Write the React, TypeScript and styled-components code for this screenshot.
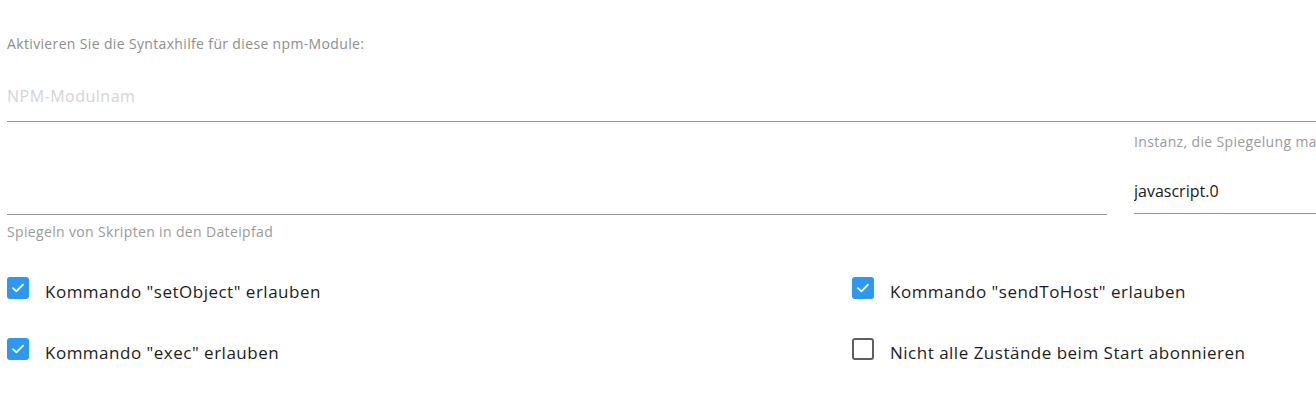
import * as React from "react";
import styled, { createGlobalStyle } from "styled-components";

const GlobalStyle = createGlobalStyle`
  html, body {
    margin: 0;
    padding: 0;
    background: #ffffff;
    overflow: hidden;
  }
  body {
    font-family: "Open Sans", "Noto Sans", sans-serif;
  }
`;

const Page = styled.div`
  width: 1690px;
  padding: 0 0 0 7px;
  box-sizing: border-box;
`;

const SectionLabel = styled.div`
  margin-top: 35px;
  height: 18px;
  line-height: 18px;
  font-size: 14px;
  letter-spacing: 0.35px;
  color: #8e8e8e;
`;

const Field = styled.div<{ $width?: string }>`
  display: flex;
  flex-direction: column;
  width: ${(p) => p.$width || "100%"};
`;

const FloatLabel = styled.div`
  height: 18px;
  line-height: 18px;
  font-size: 14px;
  letter-spacing: 0.35px;
  color: #9a9a9a;
  white-space: nowrap;
`;

const Input = styled.input`
  border: none;
  border-bottom: 1px solid #949494;
  outline: none;
  padding: 0;
  background: transparent;
  font-family: inherit;
  font-size: 16px;
  color: #1a1a1a;
  box-sizing: border-box;

  &::placeholder {
    color: #d4d4d4;
    letter-spacing: 0.5px;
  }
`;

const ModuleInput = styled(Input)`
  margin-top: 22px;
  height: 47px;
  padding-bottom: 4px;
  width: 100%;
`;

const MirrorRow = styled.div`
  display: flex;
  gap: 27px;
  margin-top: 11px;
`;

const MirrorInput = styled(Input)`
  height: 82px;
  width: 100%;
`;

const InstanceInput = styled(Input)`
  margin-top: 14px;
  height: 49px;
  padding-top: 4px;
  width: 100%;
`;

const Helper = styled.div`
  margin-top: 8px;
  height: 18px;
  line-height: 18px;
  font-size: 14px;
  letter-spacing: 0.35px;
  color: #9a9a9a;
`;

const Options = styled.div`
  display: grid;
  grid-template-columns: 845px 845px;
  row-gap: 39px;
  margin-top: 36px;
`;

const Option = styled.label`
  display: flex;
  align-items: center;
  height: 22px;
  gap: 16px;
  font-size: 17px;
  letter-spacing: 0.5px;
  color: #1c1c1c;
  cursor: pointer;
`;

const Box = styled.span<{ $checked: boolean }>`
  width: 22px;
  height: 22px;
  box-sizing: border-box;
  border-radius: 3px;
  display: flex;
  align-items: center;
  justify-content: center;
  background: ${(p) => (p.$checked ? "#2e98f0" : "#ffffff")};
  border: ${(p) => (p.$checked ? "none" : "2px solid #5f5f5f")};
  flex-shrink: 0;
`;

const OptionText = styled.span`
  position: relative;
  top: 3px;
`;

const options = [
  { text: 'Kommando "setObject" erlauben', checked: true },
  { text: 'Kommando "sendToHost" erlauben', checked: true },
  { text: 'Kommando "exec" erlauben', checked: true },
  { text: "Nicht alle Zustände beim Start abonnieren", checked: false },
];

const Check = () => (
  <svg width="14" height="14" viewBox="0 0 14 14" fill="none">
    <path d="M2 7.2 L5.4 10.4 L12 3.6" stroke="#ffffff" strokeWidth="1.8" strokeLinecap="round" strokeLinejoin="round" />
  </svg>
);

export default function App() {
  return (
    <Page>
      <GlobalStyle />
      <SectionLabel>Aktivieren Sie die Syntaxhilfe für diese npm-Module:</SectionLabel>
      <ModuleInput placeholder="NPM-Modulnam" />
      <MirrorRow>
        <Field $width="1100px">
          <MirrorInput />
          <Helper>Spiegeln von Skripten in den Dateipfad</Helper>
        </Field>
        <Field $width="556px">
          <FloatLabel>Instanz, die Spiegelung macht</FloatLabel>
          <InstanceInput defaultValue="javascript.0" />
        </Field>
      </MirrorRow>
      <Options>
        {options.map((o) => (
          <Option key={o.text}>
            <Box $checked={o.checked}>{o.checked && <Check />}</Box>
            <OptionText>{o.text}</OptionText>
          </Option>
        ))}
      </Options>
    </Page>
  );
}
